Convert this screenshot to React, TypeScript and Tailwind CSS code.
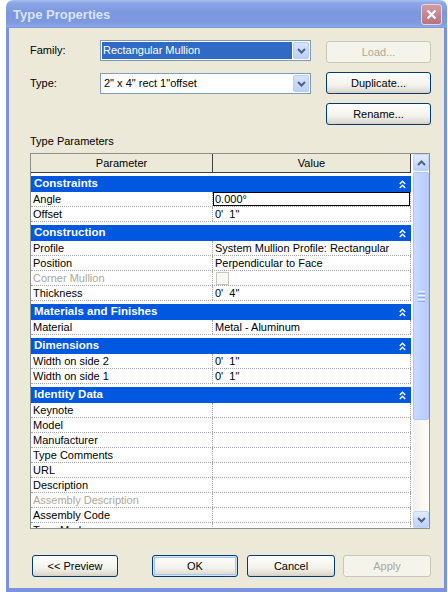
import React from 'react';

type Row = { name: string; value?: string; kind?: 'edit' | 'check'; disabled?: boolean };
type Group = { name: string; rows: Row[] };

const groups: Group[] = [
  { name: 'Constraints', rows: [ { name: 'Angle', value: '0.000°', kind: 'edit' }, { name: 'Offset', value: "0'  1\"" } ] },
  {
    name: 'Construction',
    rows: [
      { name: 'Profile', value: 'System Mullion Profile: Rectangular' },
      { name: 'Position', value: 'Perpendicular to Face' },
      { name: 'Corner Mullion', kind: 'check', disabled: true },
      { name: 'Thickness', value: "0'  4\"" },
    ],
  },
  { name: 'Materials and Finishes', rows: [ { name: 'Material', value: 'Metal - Aluminum' } ] },
  { name: 'Dimensions', rows: [ { name: 'Width on side 2', value: "0'  1\"" }, { name: 'Width on side 1', value: "0'  1\"" } ] },
  {
    name: 'Identity Data',
    rows: [
      { name: 'Keynote' },
      { name: 'Model' },
      { name: 'Manufacturer' },
      { name: 'Type Comments' },
      { name: 'URL' },
      { name: 'Description' },
      { name: 'Assembly Description', disabled: true },
      { name: 'Assembly Code' },
      { name: 'Type Mark' },
    ],
  },
];

function Chev({ up = false, color = '#4D6185' }: { up?: boolean; color?: string }) {
  return (
    <svg width="9" height="6" viewBox="0 0 9 6">
      <polyline
        points={up ? '1,5 4.5,1.5 8,5' : '1,1 4.5,4.5 8,1'}
        fill="none"
        stroke={color}
        strokeWidth="2"
      />
    </svg>
  );
}

function Collapse() {
  return (
    <svg width="7" height="9" viewBox="0 0 7 9">
      <polyline points="0.8,4 3.5,1.2 6.2,4" fill="none" stroke="#fff" strokeWidth="1.4" />
      <polyline points="0.8,8 3.5,5.2 6.2,8" fill="none" stroke="#fff" strokeWidth="1.4" />
    </svg>
  );
}

function DropBtn() {
  return (
    <div className="w-[16px] h-full rounded-[2px] border border-[#BACDF7] bg-[linear-gradient(to_bottom,#D8E4FC,#BCD0F8)] flex items-center justify-center">
      <Chev />
    </div>
  );
}

function Btn({ label, disabled, def, w }: { label: string; disabled?: boolean; def?: boolean; w: string }) {
  if (disabled) {
    return (
      <div className={`${w} h-[22px] rounded-[3px] border border-[#C9C7BA] bg-[#F5F4EA] text-[#ACA899] flex items-center justify-center text-[11px]`}>
        {label}
      </div>
    );
  }
  return (
    <div
      className={`${w} h-[22px] rounded-[3px] border border-[#003C74] bg-[linear-gradient(to_bottom,#FFFFFF,#F3F2EC_60%,#E3E0D6_85%,#D6D0C5)] text-black flex items-center justify-center text-[11px] ${
        def ? 'shadow-[inset_0_0_0_1px_#CEE7FF,inset_0_0_0_2px_#A9C6F2]' : ''
      }`}
    >
      {label}
    </div>
  );
}

function Grid() {
  return (
    <div className="mt-[5px] w-[400px] h-[376px] border border-[#8E8F8F] bg-white flex">
      <div className="w-[382px] h-full overflow-hidden flex flex-col">
        <div className="w-[380px] h-[19px] shrink-0 flex bg-[#ECE9D8] border-b border-[#404040]">
          <div className="w-[182px] h-full border-r border-[#404040] flex items-center justify-center text-[11px]">Parameter</div>
          <div className="w-[198px] h-full border-r border-[#404040] flex items-center justify-center text-[11px]">Value</div>
        </div>
        {groups.map((g) => (
          <div key={g.name} className="mt-[3px] shrink-0 flex flex-col">
            <div className="w-[380px] h-[16px] bg-[#0058E1] flex items-center pl-[3px] pr-[5px]">
              <span className="text-white font-bold text-[11.5px] leading-none">{g.name}</span>
              <span className="ml-auto flex items-center">
                <Collapse />
              </span>
            </div>
            {g.rows.map((r) => (
              <div key={r.name} className="w-[380px] h-[15px] shrink-0 flex border-b border-dotted border-[#A7A6AA]">
                <div
                  className={`w-[182px] h-full border-r border-dotted border-[#A7A6AA] pl-[2px] flex items-center text-[11px] whitespace-nowrap ${
                    r.disabled ? 'text-[#ACA899]' : 'text-black'
                  }`}
                >
                  {r.name}
                </div>
                <div className="w-[198px] h-full border-r border-dotted border-[#A7A6AA] flex items-center text-[11px] whitespace-pre">
                  {r.kind === 'edit' ? (
                    <div className="w-[197px] h-[14px] border border-black flex items-center pl-[1px]">{r.value}</div>
                  ) : r.kind === 'check' ? (
                    <div className="ml-[3px] w-[13px] h-[13px] border border-[#C9C7BA] bg-[#F8F8F4]" />
                  ) : (
                    <span className="pl-[2px]">{r.value ?? ''}</span>
                  )}
                </div>
              </div>
            ))}
          </div>
        ))}
      </div>
      <div className="w-[16px] h-full flex flex-col bg-[linear-gradient(to_right,#F3F1EC,#FEFEFB)]">
        <div className="h-[17px] shrink-0 rounded-[2px] border border-[#C3D3FD] bg-[linear-gradient(to_bottom,#E3ECFE,#BBD0FA)] flex items-center justify-center">
          <Chev up />
        </div>
        <div className="mt-[1px] h-[248px] shrink-0 rounded-[2px] border border-[#B1C6F5] bg-[linear-gradient(to_right,#C9DAFD,#BED2FC_50%,#B7CDFB)] flex flex-col items-center justify-center gap-[1px]">
          <div className="w-[7px] h-[1px] bg-[#EEF4FE]" />
          <div className="w-[7px] h-[1px] bg-[#8CB0F8]" />
          <div className="w-[7px] h-[1px] bg-[#EEF4FE]" />
          <div className="w-[7px] h-[1px] bg-[#8CB0F8]" />
          <div className="w-[7px] h-[1px] bg-[#EEF4FE]" />
          <div className="w-[7px] h-[1px] bg-[#8CB0F8]" />
        </div>
        <div className="flex-1" />
        <div className="h-[17px] shrink-0 rounded-[2px] border border-[#C3D3FD] bg-[linear-gradient(to_bottom,#E3ECFE,#BBD0FA)] flex items-center justify-center">
          <Chev />
        </div>
      </div>
    </div>
  );
}

export default function App() {
  return (
    <div className="w-[448px] h-[592px] bg-white overflow-hidden font-['Liberation_Sans',Arial,sans-serif] text-black">
      <div className="ml-[6px] w-[441px] h-[592px] flex flex-col">
        <div className="h-[28px] shrink-0 rounded-t-[7px] bg-[linear-gradient(to_bottom,#A9C0F1_0%,#8AA5E6_12%,#7C97DF_45%,#7E99E0_80%,#8CA6E7_95%,#7A95DE_100%)] flex items-center pl-[7px] pr-[5px]">
          <span className="text-[#D8E4F8] font-bold text-[13px] leading-none">Type Properties</span>
          <div className="ml-auto w-[21px] h-[21px] rounded-[3px] border border-[#E8D6DA] bg-[linear-gradient(to_bottom,#D29AA4,#B8737F)] flex items-center justify-center">
            <svg width="11" height="11" viewBox="0 0 11 11">
              <path d="M1.5 1.5 L9.5 9.5 M9.5 1.5 L1.5 9.5" stroke="#fff" strokeWidth="2.2" />
            </svg>
          </div>
        </div>
        <div className="flex-1 bg-[#ECE9D8] border-x-[3px] border-b-[4px] border-[#7B93DF] flex flex-col pl-[21px] pr-[13px] text-[11px]">
          <div className="mt-[12px] flex items-start">
            <div className="w-[70px] h-[21px] flex items-center">Family:</div>
            <div className="w-[211px] h-[21px] border border-[#7F9DB9] bg-white p-[1px] flex gap-[1px]">
              <div className="flex-1 h-full bg-[#316AC5] text-white pl-[1px] flex items-center">Rectangular Mullion</div>
              <DropBtn />
            </div>
            <div className="ml-auto mt-[1px]">
              <Btn label="Load..." disabled w="w-[105px]" />
            </div>
          </div>
          <div className="mt-[9px] flex items-start">
            <div className="w-[70px] h-[21px] mt-[1px] flex items-center">Type:</div>
            <div className="w-[211px] h-[21px] mt-[1px] border border-[#7F9DB9] bg-white p-[1px] flex gap-[1px]">
              <div className="flex-1 h-full pl-[2px] flex items-center">2" x 4" rect 1"offset</div>
              <DropBtn />
            </div>
            <div className="ml-auto">
              <Btn label="Duplicate..." w="w-[105px]" />
            </div>
          </div>
          <div className="mt-[9px] flex justify-end">
            <Btn label="Rename..." w="w-[105px]" />
          </div>
          <div className="mt-[9px] h-[14px] leading-[14px]">Type Parameters</div>
          <Grid />
          <div className="mt-[26px] flex">
            <div className="ml-[2px]">
              <Btn label="<< Preview" w="w-[86px]" />
            </div>
            <div className="ml-[34px]">
              <Btn label="OK" def w="w-[86px]" />
            </div>
            <div className="ml-[9px]">
              <Btn label="Cancel" w="w-[88px]" />
            </div>
            <div className="ml-[8px]">
              <Btn label="Apply" disabled w="w-[88px]" />
            </div>
          </div>
        </div>
      </div>
    </div>
  );
}
